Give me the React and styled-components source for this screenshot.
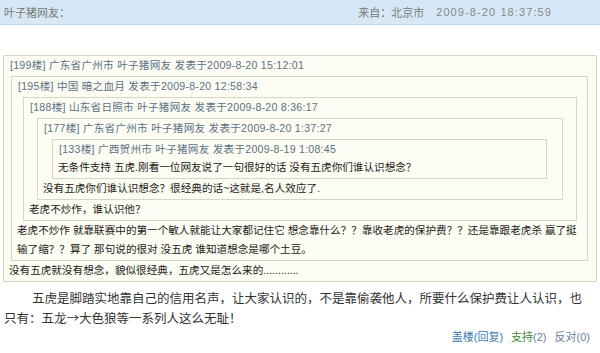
import styled, { createGlobalStyle } from 'styled-components';

const GlobalStyle = createGlobalStyle`
  body {
    margin: 0;
    background: #fff;
    font-family: "Liberation Sans", "Noto Sans CJK SC", sans-serif;
  }
`;

const Page = styled.div`
  width: 600px;
`;

const TopBar = styled.div`
  height: 24px;
  display: flex;
  align-items: center;
  padding: 0 4px;
  background: #d6e8f5;
  border-bottom: 1px solid #bcd5ea;
  font-size: 11px;
  color: #777;
`;

const Author = styled.span`
  flex: 1;
`;

const From = styled.span`
  margin-right: 12px;
`;

const Time = styled.span`
  margin-right: 44px;
  letter-spacing: 1.1px;
  color: #888;
`;

const Thread = styled.div`
  margin-top: 30px;
  padding: 0 3px;
`;

const Quote = styled.div`
  border: 1px solid #d6d6c8;
  background: #fdfdf3;
  margin: ${(p) => (p.$nested ? '2px' : '0')} ${(p) => p.$mr || 0}px 0 ${(p) => p.$ml || 0}px;
  padding-bottom: 1px;
`;

const QuoteHead = styled.div`
  line-height: 18px;
  padding-left: 6px;
  font-size: 10.6px;
  letter-spacing: 0.25px;
  color: #5b7086;
  white-space: nowrap;
`;

const QuoteText = styled.div`
  line-height: 19px;
  padding: 0 6px 0 5px;
  font-size: 10.6px;
  color: #1a1a1a;
`;

const Body = styled.p`
  margin: 6px 0 0;
  padding: 0 10px 0 4px;
  text-indent: 28px;
  font-family: "Noto Sans CJK SC", sans-serif;
  font-size: 12.5px;
  line-height: 20px;
  color: #333;
`;

const Actions = styled.div`
  display: flex;
  justify-content: flex-end;
  gap: 8px;
  padding-right: 10px;
  font-size: 11px;
  line-height: 18px;
  color: #6a8299;
`;

const Action = styled.span`
  color: ${(p) => p.$color || '#6a8299'};
`;

const Count = styled.span`
  color: #6a8299;
`;

const quotes = [
  { floor: 199, place: '广东省广州市', user: '叶子猪网友', time: '2009-8-20 15:12:01', ml: 0, mr: 0, text: '没有五虎就没有想念，貌似很经典，五虎又是怎么来的............' },
  { floor: 195, place: '中国', user: '暗之血月', time: '2009-8-20 12:58:34', ml: 7, mr: 8, text: '老虎不炒作 就靠联赛中的第一个敏人就能让大家都记住它 想念靠什么？？靠收老虎的保护费？？还是靠跟老虎杀 赢了挺输了缩？？算了 那句说的很对 没五虎 谁知道想念是哪个土豆。' },
  { floor: 188, place: '山东省日照市', user: '叶子猪网友', time: '2009-8-20 8:36:17', ml: 11, mr: 10, text: '老虎不炒作，谁认识他？' },
  { floor: 177, place: '广东省广州市', user: '叶子猪网友', time: '2009-8-20 1:37:27', ml: 13, mr: 13, text: '没有五虎你们谁认识想念？很经典的话~这就是,名人效应了.' },
  { floor: 133, place: '广西贺州市', user: '叶子猪网友', time: '2009-8-19 1:08:45', ml: 14, mr: 15, text: '无条件支持 五虎.刚看一位网友说了一句很好的话 没有五虎你们谁认识想念？' },
];

const renderQuote = (index) => {
  const q = quotes[index];
  if (!q) return null;
  return (
    <Quote $nested={index > 0} $ml={q.ml} $mr={q.mr}>
      <QuoteHead>
        [{q.floor}楼] {q.place} {q.user} 发表于{q.time}
      </QuoteHead>
      {renderQuote(index + 1)}
      <QuoteText>{q.text}</QuoteText>
    </Quote>
  );
};

const App = () => {
  return (
    <Page>
      <GlobalStyle />
      <TopBar>
        <Author>叶子猪网友：</Author>
        <From>来自：北京市</From>
        <Time>2009-8-20 18:37:59</Time>
      </TopBar>
      <Thread>{renderQuote(0)}</Thread>
      <Body>
        五虎是脚踏实地靠自己的信用名声，让大家认识的，不是靠偷袭他人，所要什么保护费让人认识，也只有：五龙→大色狼等一系列人这么无耻！
      </Body>
      <Actions>
        <Action $color="#3d7bb0">盖楼(回复)</Action>
        <Action $color="#3a8a32">
          支持<Count>(2)</Count>
        </Action>
        <Action>反对(0)</Action>
      </Actions>
    </Page>
  );
};

export default App;
